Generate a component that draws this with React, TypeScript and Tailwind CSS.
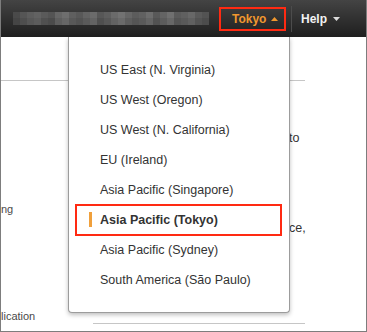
const topBlocks = [
  "bg-[#4a4a4a]", "bg-[#555555]", "bg-[#5d5d5d]", "bg-[#626262]", "bg-[#5a5a5a]", "bg-[#545454]", "bg-[#666666]",
  "bg-[#6e6e6e]", "bg-[#5f5f5f]", "bg-[#585858]", "bg-[#636363]", "bg-[#6b6b6b]", "bg-[#575757]", "bg-[#5e5e5e]",
  "bg-[#6a6a6a]", "bg-[#727272]", "bg-[#666666]", "bg-[#5c5c5c]", "bg-[#616161]", "bg-[#6d6d6d]", "bg-[#595959]",
  "bg-[#646464]", "bg-[#707070]", "bg-[#5b5b5b]", "bg-[#606060]", "bg-[#686868]", "bg-[#5a5a5a]", "bg-[#535353]",
];
const bottomBlocks = [
  "bg-[#454545]", "bg-[#4e4e4e]", "bg-[#575757]", "bg-[#5c5c5c]", "bg-[#505050]", "bg-[#4b4b4b]", "bg-[#5e5e5e]",
  "bg-[#666666]", "bg-[#585858]", "bg-[#525252]", "bg-[#5a5a5a]", "bg-[#636363]", "bg-[#4f4f4f]", "bg-[#575757]",
  "bg-[#626262]", "bg-[#6a6a6a]", "bg-[#5d5d5d]", "bg-[#555555]", "bg-[#5a5a5a]", "bg-[#646464]", "bg-[#525252]",
  "bg-[#5c5c5c]", "bg-[#676767]", "bg-[#545454]", "bg-[#595959]", "bg-[#606060]", "bg-[#535353]", "bg-[#4c4c4c]",
];

const regions = [
  "US East (N. Virginia)",
  "US West (Oregon)",
  "US West (N. California)",
  "EU (Ireland)",
  "Asia Pacific (Singapore)",
  "Asia Pacific (Tokyo)",
  "Asia Pacific (Sydney)",
  "South America (São Paulo)",
];

export default function App() {
  return (
    <div className="w-[367px] h-[332px] overflow-hidden border-x border-b border-[#7d7d7d] bg-white font-['Liberation_Sans',Arial,sans-serif]">
      <header className="h-[37px] flex items-center bg-gradient-to-b from-[#444444] to-[#1f1f1f]">
        <div className="ml-[12px] w-[199px] flex flex-col overflow-hidden">
          <div className="flex h-[6px]">
            {topBlocks.map((c, i) => (
              <div key={i} className={"w-[7px] h-full shrink-0 " + c} />
            ))}
          </div>
          <div className="flex h-[7px]">
            {bottomBlocks.map((c, i) => (
              <div key={i} className={"w-[7px] h-full shrink-0 " + c} />
            ))}
          </div>
        </div>
        <div className="ml-[7px] h-[24px] w-[67px] border-2 border-[#ff2a12] flex items-center pl-[11px] gap-[5px]">
          <span className="text-[12px] leading-none font-bold text-[#f0982f]">Tokyo</span>
          <svg width="7" height="4" viewBox="0 0 7 4">
            <polygon points="0,4 3.5,0 7,4" fill="#f0982f" />
          </svg>
        </div>
        <div className="ml-[5px] w-px h-[26px] bg-[#4c4c4c]" />
        <div className="ml-[9px] flex items-center gap-[6px]">
          <span className="text-[12px] leading-none font-bold text-[#f2f2f2]">Help</span>
          <svg width="7" height="4" viewBox="0 0 7 4">
            <polygon points="0,0 3.5,4 7,0" fill="#dcdcdc" />
          </svg>
        </div>
      </header>

      <div className="relative h-[294px]">
        <div className="flex flex-col">
          <div className="h-[43px]" />
          <div className="h-px w-[304px] bg-[#c6c6c6]" />
          <div className="flex h-[242px]">
            <div className="w-[92px] text-[11px] leading-[14px] text-[#4a4a4a]">
              <div className="pt-[121px]">ng</div>
              <div className="pt-[93px]">lication</div>
            </div>
            <div className="flex-1 text-[12.5px] leading-[16px] text-[#333]">
              <div className="pl-[196px] pt-[49px]">to</div>
              <div className="pl-[196px] pt-[74px]">ce,</div>
            </div>
          </div>
          <div className="ml-[92px] h-px w-[212px] bg-[#c6c6c6]" />
        </div>

        <div className="absolute top-0 left-[67px] w-[222px] h-[276px] bg-white border-x border-b border-[#9c9c9c] rounded-b-[4px] shadow-[0_2px_4px_rgba(0,0,0,0.25)] pt-[18px]">
          {regions.map((r) => {
            const active = r === "Asia Pacific (Tokyo)";
            return (
              <div
                key={r}
                className={
                  active
                    ? "relative h-[30px] flex items-center pl-[31px] text-[12.5px] font-bold text-[#333]"
                    : "relative h-[30px] flex items-center pl-[31px] text-[12.5px] text-[#333]"
                }
              >
                {active && (
                  <>
                    <div className="absolute left-[6px] right-[7px] -top-px -bottom-px border-2 border-[#ff2a12]" />
                    <div className="absolute left-[20px] top-[7px] w-[3px] h-[15px] bg-[#f0a03c]" />
                  </>
                )}
                {r}
              </div>
            );
          })}
        </div>
      </div>
    </div>
  );
}
